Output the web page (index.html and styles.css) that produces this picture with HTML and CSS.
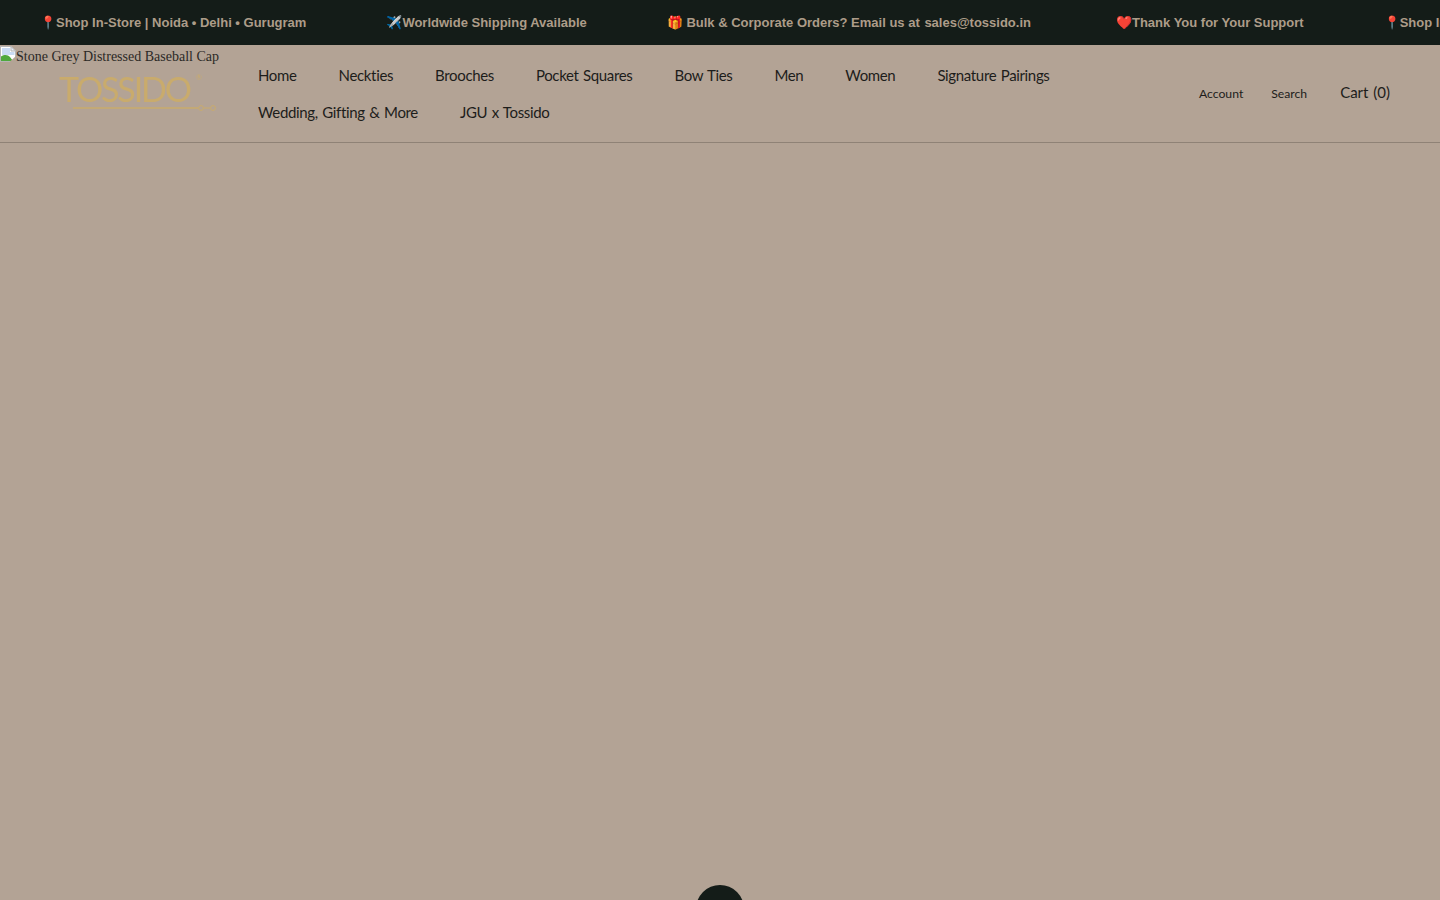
FILE: index.html
```html
<!DOCTYPE html>
<html lang="en">
<head>
  <meta charset="UTF-8" />
  <meta name="viewport" content="width=device-width, initial-scale=1.0"/>
  <title>Stone Grey Distressed Baseball Cap | Tossido</title>
  <link rel="stylesheet" href="styles.css">
</head>
<body>

  <div class="announcement">
    <p class="announcement-item">📍Shop In-Store | Noida • Delhi • Gurugram</p>
    <p class="announcement-item">✈️Worldwide Shipping Available</p>
    <p class="announcement-item announcement-item--email">🎁 Bulk &amp; Corporate Orders? Email us at <a href="#">sales@tossido.in</a></p>
    <p class="announcement-item">❤️Thank You for Your Support</p>
    <p class="announcement-item">📍Shop In-Store | Noida • Delhi • Gurugram</p>
  </div>

  <header class="header">
    <a class="logo" href="#">
      <span class="logo-alt">
        <svg class="broken-icon" width="16" height="16" viewBox="0 0 16 16">
          <path d="M0.5 0.5H11L15.5 5V15.5H0.5Z" fill="#fff" stroke="#b5b5b5"/>
          <path d="M11 0.5V5H15.5Z" fill="#e6edf7" stroke="#b5b5b5"/>
          <path d="M2 2H10V6H14.5V9H2Z" fill="#c9dbf4"/>
          <path d="M1 15V10.5C5 8 8 9 10 11L13 15Z" fill="#4fa83d"/>
          <path d="M10 15.5L16 10V16H10Z" fill="#b3a395"/>
        </svg>Stone Grey Distressed Baseball Cap
      </span>
      <span class="logo-mark">
        <span class="logo-name">TOSSIDO<sup class="logo-reg">®</sup></span>
        <svg class="logo-line" width="144" height="8" viewBox="0 0 144 8">
          <path d="M0 4H125" stroke="#c9ab6c" stroke-width="1.6"/>
          <circle cx="128" cy="4" r="2.4" fill="none" stroke="#c9ab6c"/>
          <circle cx="140" cy="4" r="2.4" fill="none" stroke="#c9ab6c"/>
          <path d="M131 4H137" stroke="#c9ab6c"/>
        </svg>
      </span>
    </a>

    <nav class="main-nav">
      <a href="#">Home</a>
      <a href="#">Neckties</a>
      <a href="#">Brooches</a>
      <a href="#">Pocket Squares</a>
      <a href="#">Bow Ties</a>
      <a href="#">Men</a>
      <a href="#">Women</a>
      <a href="#">Signature Pairings</a>
      <a href="#">Wedding, Gifting &amp; More</a>
      <a href="#">JGU x Tossido</a>
    </nav>

    <div class="header-actions">
      <a href="#">Account</a>
      <a href="#">Search</a>
      <a class="cart-link" href="#">Cart (0)</a>
    </div>
  </header>

  <div class="chat-bubble"></div>

</body>
</html>
```

FILE: styles.css
```css
html, body {
  height: 100%;
}
body {
  margin: 0;
  overflow: hidden;
  background: #b3a395;
  font-family: 'Lato', 'Liberation Sans', sans-serif;
  color: #1d1d1b;
}
a {
  color: inherit;
  text-decoration: none;
}

.announcement {
  display: flex;
  height: 45px;
  align-items: center;
  background: #141c18;
  overflow: hidden;
  white-space: nowrap;
  padding-left: 40px;
  gap: 80px;
}
.announcement-item {
  margin: 0;
  flex: none;
  font-family: 'Liberation Sans', Arial, sans-serif;
  font-size: 13px;
  font-weight: bold;
  color: #ad9c89;
}
.announcement-item--email {
  padding-right: 5px;
}
.announcement-item a {
  margin-left: 1px;
}

.header {
  display: flex;
  align-items: flex-start;
  height: 97px;
  border-bottom: 1px solid #8f8276;
  padding-right: 50px;
}

.logo {
  flex: none;
  width: 258px;
  display: block;
}
.logo-alt {
  display: flex;
  align-items: center;
  height: 24px;
  font-family: 'Liberation Serif', 'Times New Roman', serif;
  font-size: 14px;
  color: #2b2926;
  white-space: nowrap;
}
.broken-icon {
  flex: none;
  align-self: flex-start;
  margin-top: 1px;
}
.logo-mark {
  display: block;
  margin-left: 59px;
  margin-top: 4px;
  filter: blur(0.4px);
}
.logo-name {
  display: block;
  font-family: 'Lato', sans-serif;
  font-weight: 400;
  font-size: 34px;
  line-height: 32px;
  letter-spacing: -2.1px;
  color: #c9ab6c;
}
.logo-reg {
  font-size: 7px;
  line-height: 0;
  letter-spacing: 0;
  margin-left: 6px;
  vertical-align: 22px;
}
.logo-line {
  display: block;
  margin-left: 14px;
  margin-top: -1px;
}

.main-nav {
  flex: 1;
  display: flex;
  flex-wrap: wrap;
  column-gap: 42px;
  row-gap: 15px;
  padding-top: 19px;
  padding-right: 60px;
  font-size: 15px;
  letter-spacing: -0.35px;
  word-spacing: 1px;
  line-height: 22px;
}

.header-actions {
  flex: none;
  display: flex;
  align-items: center;
  gap: 28px;
  height: 96px;
  font-size: 12.2px;
}
.cart-link {
  font-size: 15px;
  word-spacing: 1px;
  margin-left: 5px;
  margin-bottom: 2px;
}

.chat-bubble {
  position: fixed;
  left: 696px;
  top: 885px;
  width: 48px;
  height: 48px;
  border-radius: 50%;
  background: #141c18;
}
```
